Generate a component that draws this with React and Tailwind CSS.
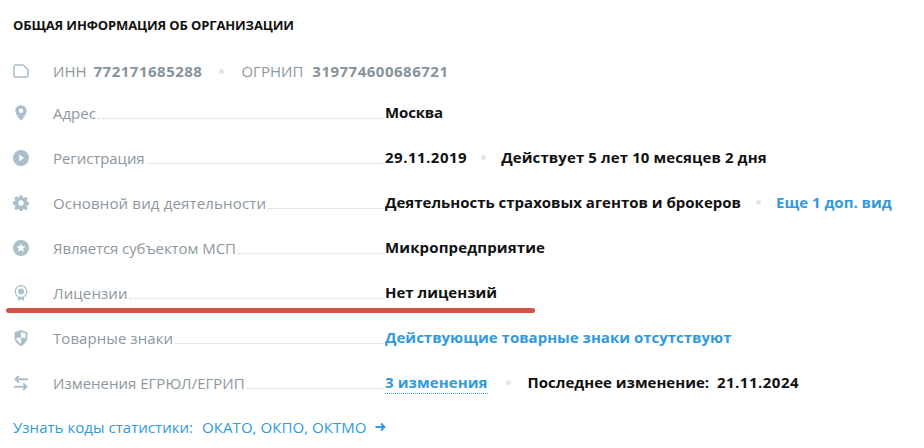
import React from 'react';

const font = { fontFamily: '"Open Sans", sans-serif' };

function Folder() {
    return (
        <svg width="16" height="16" viewBox="0 0 16 16" fill="none">
            <path d="M1 3.500C1 2.700 1.600 2 2.400 2H10l5 4.500v6c0 .8-.7 1.500-1.500 1.500h-11C1.700 14 1 13.300 1 12.500z" stroke="#a9bfcb" strokeWidth="1.600" />
        </svg>
    );
}

function Pin() {
    return (
        <svg width="16" height="16" viewBox="0 0 16 16">
            <path fillRule="evenodd" d="M8 .2c3.200 0 5.600 2.400 5.600 5.500 0 3.400-3.400 7.800-5.600 10C5.800 13.500 2.400 9.100 2.400 5.700 2.400 2.600 4.800.2 8 .2zm0 3.300a2.300 2.300 0 1 0 0 4.600 2.300 2.300 0 0 0 0-4.600z" fill="#a9bfcb" />
        </svg>
    );
}

function Play() {
    return (
        <svg width="16" height="16" viewBox="0 0 16 16">
            <path fillRule="evenodd" d="M8 0a8 8 0 1 1 0 16A8 8 0 0 1 8 0zM6.200 4.800v6.400L11 8z" fill="#a9bfcb" />
        </svg>
    );
}

function Gear() {
    return (
        <svg width="16" height="16" viewBox="0 0 16 16">
            <path fillRule="evenodd" d="M6.600.3h2.800l.4 2.100 1.200.5 1.800-1.200 2 2-1.200 1.800.5 1.200 2.100.4v2.800l-2.100.4-.5 1.200 1.200 1.800-2 2-1.800-1.200-1.200.5-.4 2.100H6.600l-.4-2.100-1.200-.5-1.800 1.200-2-2 1.200-1.800-.5-1.200L-.2 9.400V6.600l2.100-.4.5-1.200-1.200-1.800 2-2 1.800 1.200 1.200-.5zM8 5.300a2.700 2.700 0 1 0 0 5.400 2.700 2.700 0 0 0 0-5.400z" fill="#a9bfcb" />
        </svg>
    );
}

function StarCircle() {
    return (
        <svg width="16" height="16" viewBox="0 0 16 16">
            <path fillRule="evenodd" d="M8 0a8 8 0 1 1 0 16A8 8 0 0 1 8 0zm0 3.200L6.700 6.300l-3.300.3 2.500 2.100-.8 3.200L8 10.200l2.900 1.700-.8-3.200 2.500-2.100-3.300-.3z" fill="#a9bfcb" />
        </svg>
    );
}

function Medal() {
    return (
        <svg width="16" height="16" viewBox="0 0 16 16" fill="none">
            <circle cx="8" cy="6.500" r="5.800" stroke="#a9bfcb" strokeWidth="1.300" />
            <circle cx="8" cy="6.500" r="3" fill="#a9bfcb" />
            <path d="M5 12.300v3.500L8 14.300l3 1.500v-3.500z" fill="#a9bfcb" />
        </svg>
    );
}

function ShieldHalf() {
    return (
        <svg width="16" height="16" viewBox="0 0 16 16">
            <path fillRule="evenodd" d="M8 0l6.500 2.200v5c0 4-2.800 7.200-6.500 8.800-3.700-1.600-6.500-4.800-6.500-8.800v-5zM8 2v5.800H3.300c.3 2.700 2.300 4.800 4.700 6V7.800h4.700V3.400z" fill="#a9bfcb" />
        </svg>
    );
}

function Swap() {
    return (
        <svg width="16" height="16" viewBox="0 0 16 16" fill="none" stroke="#a9bfcb" strokeWidth="2">
            <path d="M15 4.300H2.500M5.800 1L2.500 4.300l3.300 3.300" />
            <path d="M1 11.700h12.500M10.200 8.400l3.300 3.300-3.300 3.300" />
        </svg>
    );
}

function Dot({ className }) {
    return <span className={`inline-block w-[5px] h-[5px] rounded-full bg-[#dbe7ee] ${className}`} />;
}

const blue = 'text-[#2f9ade]';

const rows = [
    {
        icon: Pin, label: 'Адрес', top: '',
        value: <span className="tracking-[-0.15px]">Москва</span>,
    },
    {
        icon: Play, label: 'Регистрация', top: 'mt-[17px]', labelClass: 'tracking-[-0.08px]',
        value: (
            <>
                <span className="tracking-[0.5px]">29.11.2019</span>
                <Dot className="ml-[14px] mr-[15px]" />
                <span className="tracking-[0.1px]">Действует 5 лет 10 месяцев 2 дня</span>
            </>
        ),
    },
    {
        icon: Gear, label: 'Основной вид деятельности', top: 'mt-[17px]', labelClass: 'tracking-[0.16px]',
        value: (
            <>
                <span>Деятельность страховых агентов и брокеров</span>
                <Dot className="mx-[15px]" />
                <span className={blue}>Еще 1 доп. вид</span>
            </>
        ),
    },
    {
        icon: StarCircle, label: 'Является субъектом МСП', top: 'mt-[17px]', labelClass: 'tracking-[-0.09px]',
        value: <span className="tracking-[0.13px]">Микропредприятие</span>,
    },
    {
        icon: Medal, label: 'Лицензии', top: 'mt-[17px]', labelClass: 'tracking-[0.12px]',
        value: <span>Нет лицензий</span>,
    },
    {
        icon: ShieldHalf, label: 'Товарные знаки', top: 'mt-[17px]', labelClass: 'tracking-[0.07px]',
        value: <span className={blue}>Действующие товарные знаки отсутствуют</span>,
    },
    {
        icon: Swap, label: 'Изменения ЕГРЮЛ/ЕГРИП', top: 'mt-[17px]',
        value: (
            <>
                <span className={`${blue} border-b border-dotted border-[#2f9ade] leading-[21px] tracking-[0.09px]`}>3 изменения</span>
                <Dot className="ml-[18px] mr-[17px]" />
                <span>Последнее изменение:&nbsp; <span className="tracking-[0.5px]">21.11.2024</span></span>
            </>
        ),
    },
];

export default function App() {
    return (
        <div className="relative w-[924px] h-[448px] overflow-hidden bg-white pl-[13px] pt-[16px]" style={font}>
            <h2 className="text-[13px] leading-[18px] font-bold text-[#111] tracking-[-0.13px]">ОБЩАЯ ИНФОРМАЦИЯ ОБ ОРГАНИЗАЦИИ</h2>

            <div className="flex items-center h-[28px] mt-[23px] text-[15px] text-[#8c979e]">
                <span className="w-[40px] flex"><Folder /></span>
                <span>ИНН</span>
                <b className="ml-[7px] font-bold text-[#87939b] tracking-[0.5px]">772171685288</b>
                <Dot className="mx-[17px]" />
                <span>ОГРНИП</span>
                <b className="ml-[9px] font-bold text-[#87939b] tracking-[0.5px]">319774600686721</b>
            </div>

            <div className="mt-[14px]">
                {rows.map((r, i) => (
                    <div key={i} className={`flex items-center h-[28px] text-[15px] ${r.top}`}>
                        <span className="w-[40px] flex shrink-0"><r.icon /></span>
                        <div className="w-[332px] shrink-0 flex items-baseline pr-[1px]">
                            <span className={`text-[#8c979e] ${r.labelClass || ''}`}>{r.label}</span>
                            <span className="flex-1 ml-[2px] border-b border-dotted border-[#cfd6da]" />
                        </div>
                        <div className="flex items-center font-bold text-[#111] whitespace-nowrap -mt-[1px]">{r.value}</div>
                    </div>
                ))}
            </div>

            <div className={`flex items-center mt-[19px] text-[15px] ${blue}`}>
                <span className="tracking-[0.04px]">Узнать коды статистики:</span>
                <span className="ml-[9px] tracking-[0.06px]">ОКАТО, ОКПО, ОКТМО</span>
                <svg className="ml-[8px]" width="11" height="10" viewBox="0 0 11 10" fill="none" stroke="#2f9ade" strokeWidth="1.800">
                    <path d="M0.500 5H9.500M6 1.500L9.500 5 6 8.500" />
                </svg>
            </div>

            {/* red marker stroke over the licences row */}
            <div className="absolute left-[6px] top-[308px] w-[529px] h-[5px] rounded-full bg-[#d15246]" />
        </div>
    );
}
